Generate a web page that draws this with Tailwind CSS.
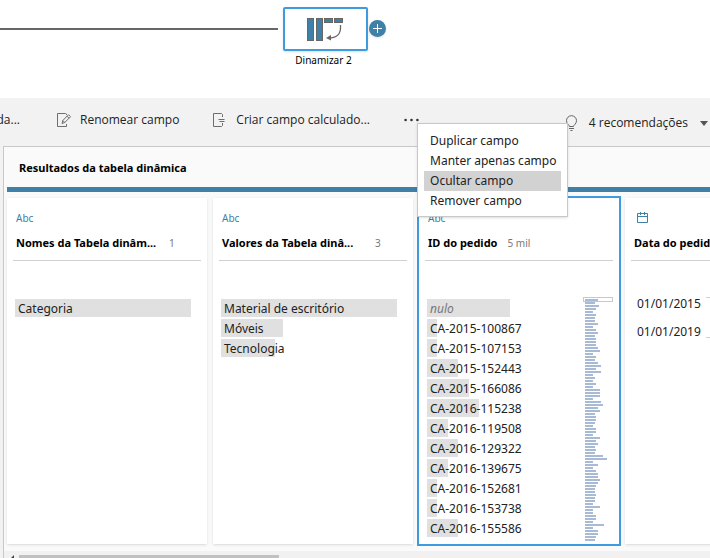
<!DOCTYPE html>
<html lang="pt-BR">
  <head>
    <meta charset="UTF-8" />
    <meta name="viewport" content="width=device-width, initial-scale=1.0" />
    <title>Fluxo - Resultados da tabela dinâmica</title>
    <script src="https://cdn.jsdelivr.net/npm/@tailwindcss/browser@4"></script>
  </head>
  <body
    class="h-screen flex flex-col overflow-hidden bg-white text-[#222] text-[12px] leading-5 font-['Noto_Sans','Open_Sans',sans-serif]"
  >
    <!-- Fluxo -->
    <header class="h-[98px] shrink-0 flex items-start pt-[7px]">
      <div class="w-[278px] h-0.5 mt-[21px] bg-[#6a6664]"></div>
      <div class="ml-[5px] w-[85px] flex flex-col">
        <button
          type="button"
          aria-labelledby="stepName"
          class="h-11 flex items-center justify-center rounded-xs border-2 border-[#3f9bdf] bg-white shadow-sm"
        >
          <svg class="mr-0.5" width="37" height="26" viewBox="0 0 37 26" fill="none">
            <g fill="#3f80a8" stroke="#6a6664">
              <rect x="1.5" y="2.500" width="6" height="22" />
              <rect x="10.5" y="2.500" width="6" height="22" />
              <rect x="18.500" y="2.500" width="8" height="4" />
              <rect x="28.500" y="2.500" width="8" height="4" />
            </g>
            <path d="M34.500 9v3c0 6-4 10-12 10" stroke="#6a6664" stroke-width="1.300" />
            <path d="M25 19l-5 3 5 2.500z" fill="#6a6664" />
          </svg>
        </button>
        <span id="stepName" class="mt-px pr-1 text-center text-[10px] leading-4 text-black">Dinamizar 2</span>
      </div>
      <button
        type="button"
        aria-label="Adicionar etapa"
        class="ml-px mt-[13px] size-[17px] flex items-center justify-center rounded-full bg-[#3f80a8] shadow-sm"
      >
        <svg width="9" height="9" viewBox="0 0 9 9" stroke="#fff"><path d="M4.500 0v9M0 4.500h9" /></svg>
      </button>
    </header>

    <!-- Barra de ferramentas -->
    <nav
      class="h-12 shrink-0 flex items-center bg-[#f2f2f2] pr-0.5 pb-1 whitespace-nowrap font-['Open_Sans',sans-serif]"
    >
      <button type="button" class="w-5 flex justify-end">Filtrar coluna selecionada...</button>
      <button type="button" class="ml-9 flex items-center gap-2">
        <svg width="16" height="16" viewBox="0 0 16 16" fill="none" stroke="#6e6e6e">
          <path d="M10.500 3V2L9.500 1.500h-8v13h9v-2.500" />
          <path d="M6 11.500l.8-3L12.500 2.700l2 2L8.800 10.500zM6.800 8.500l2 2M11 4.200l2 2" />
        </svg>
        Renomear campo
      </button>
      <button type="button" class="ml-[33px] flex items-center gap-2">
        <svg width="16" height="16" viewBox="0 0 16 16" fill="none" stroke="#6e6e6e">
          <path d="M10.500 5V2.500L9.500 1.500h-8v13h8l1-1V11M6.500 7.500h6M7.500 9.500h5" />
        </svg>
        Criar campo calculado...
      </button>
      <div class="relative ml-[34px]">
        <button type="button" aria-label="Mais opções" class="flex py-2">
          <svg width="15" height="4" viewBox="0 0 15 4" fill="#333">
            <circle cx="1.600" cy="2" r="1.300" />
            <circle cx="7.500" cy="2" r="1.300" />
            <circle cx="13.400" cy="2" r="1.300" />
          </svg>
        </button>
        <div
          role="menu"
          class="absolute left-[13px] top-[13px] z-10 w-[151px] flex flex-col border border-[#c8c8c8] bg-white px-1.5 pt-[7px] pb-[5px] shadow font-['Noto_Sans',sans-serif]"
        >
          <button type="button" role="menuitem" class="px-1.5 text-left">Duplicar campo</button>
          <button type="button" role="menuitem" class="px-1.5 text-left">Manter apenas campo</button>
          <button type="button" role="menuitem" class="px-1.5 text-left bg-[#d2d2d2]">Ocultar campo</button>
          <button type="button" role="menuitem" class="px-1.5 text-left">Remover campo</button>
        </div>
      </div>
      <button type="button" class="ml-auto pt-1.5 flex items-center">
        <svg width="13" height="17" viewBox="0 0 13 17" fill="none" stroke="#666">
          <path d="M4.500 11.500C4.500 10 1.500 9 1.500 5.700a5 5 0 0 1 10 0C11.500 9 8.500 10 8.500 11.500zM4 13.500h5M5.500 15.500h2" />
        </svg>
        <span class="ml-[11px]">4 recomendações</span>
        <svg class="ml-3" width="8" height="5" viewBox="0 0 8 5" fill="#555"><path d="M0 0h8L4 5z" /></svg>
      </button>
    </nav>

    <!-- Painel de perfil -->
    <div class="flex-1 min-h-0 flex bg-[#f2f2f2] pl-[3px]">
      <main class="flex-1 min-w-0 flex flex-col border-l border-t border-[#c8c8c8] bg-[#fafafa]">
        <h1 class="h-10 shrink-0 pl-[15px] pt-[11px] text-[11px] font-bold text-black">
          Resultados da tabela dinâmica
        </h1>
        <div class="ml-[3px] h-[5px] shrink-0 bg-[#3f80a8]"></div>

        <div class="flex-1 min-h-0 flex gap-1.5 overflow-hidden pl-[3px] pt-1.5 pb-[7px]">
          <section class="w-[200px] shrink-0 bg-white px-1.5 pt-2.5 shadow">
            <div class="h-5 pl-[3px] text-[10px] text-[#3f80a8]">Abc</div>
            <div class="h-[33px] flex items-center border-b border-[#d0d0d0] pl-[3px] pb-0.5 gap-2.5 whitespace-nowrap">
              <h2 class="w-[143px] text-[11px] font-bold text-black">Nomes da Tabela dinâm...</h2>
              <span class="text-[10px] text-[#777]">1</span>
            </div>
            <ul class="mt-[38px] pl-0.5 flex flex-col gap-0.5 leading-5 whitespace-nowrap">
              <li class="h-[18px] w-44 bg-[#e0e0e0] pl-[3px]">Categoria</li>
            </ul>
          </section>

          <section class="w-[200px] shrink-0 bg-white px-1.5 pt-2.5 shadow">
            <div class="h-5 pl-[3px] text-[10px] text-[#3f80a8]">Abc</div>
            <div class="h-[33px] flex items-center border-b border-[#d0d0d0] pl-[3px] pb-0.5 gap-2.5 whitespace-nowrap">
              <h2 class="w-[143px] text-[11px] font-bold text-black">Valores da Tabela dinâ...</h2>
              <span class="text-[10px] text-[#777]">3</span>
            </div>
            <ul class="mt-[38px] pl-0.5 flex flex-col gap-0.5 leading-5 whitespace-nowrap">
              <li class="h-[18px] w-44 bg-[#e0e0e0] pl-[3px]">Material de escritório</li>
              <li class="h-[18px] w-[62px] bg-[#e0e0e0] pl-[3px]">Móveis</li>
              <li class="h-[18px] w-[54px] bg-[#e0e0e0] pl-[3px]">Tecnologia</li>
            </ul>
          </section>

          <section class="w-[200px] shrink-0 bg-white px-1.5 pt-2.5 outline-2 outline-[#3f9bdf]">
            <div class="h-5 pl-[3px] text-[10px] text-[#3f80a8]">Abc</div>
            <div class="h-[33px] flex items-center border-b border-[#d0d0d0] pl-[3px] pb-0.5 gap-2.5 whitespace-nowrap">
              <h2 class="text-[11px] font-bold text-black">ID do pedido</h2>
              <span class="text-[10px] text-[#777]">5 mil</span>
            </div>
            <div class="mt-9 flex justify-between">
              <ul id="orderIds" class="mt-0.5 pl-0.5 flex flex-col gap-0.5 leading-5 whitespace-nowrap"></ul>
              <div class="relative w-[30px] pl-0.5 pt-0.5">
                <div class="absolute inset-x-0 top-0 h-[5px] border border-[#c8c8c8]"></div>
                <div id="miniMap" class="flex flex-col gap-px"></div>
              </div>
            </div>
          </section>

          <section class="w-[200px] shrink-0 bg-white px-1.5 pt-2.5 shadow">
            <div class="h-5 pl-[3px] pt-1">
              <svg class="ml-[3px]" width="11" height="11" viewBox="0 0 11 11" fill="none" stroke="#3f80a8">
                <path d="M.5 1.500h10v9H.5zM.5 4.500h10M3.500 0v3M7.500 0v3" />
              </svg>
            </div>
            <div class="h-[33px] flex items-center border-b border-[#d0d0d0] pl-[3px] pb-0.5 gap-2.5 whitespace-nowrap">
              <h2 class="text-[11px] font-bold text-black">Data do pedido</h2>
            </div>
            <div class="mt-9 pl-1.5 flex items-start gap-[5px]">
              <div class="-mt-[3px] flex flex-col gap-2">
                <span>01/01/2015</span>
                <span>01/01/2019</span>
              </div>
              <div class="h-[41px] flex-1 border-y border-[#d0d0d0]"></div>
            </div>
          </section>
        </div>

        <!-- Barra de rolagem -->
        <div class="h-[7px] shrink-0 flex items-end bg-[#f1f1f1]">
          <svg class="ml-[7px]" width="3" height="3" viewBox="0 0 3 3" fill="#444"><path d="M3 0v3H0z" /></svg>
          <div class="ml-[5px] h-[3px] w-[260px] bg-[#c1c1c1]"></div>
        </div>
      </main>
    </div>

    <script>
      const orders = [
        ["nulo", 83],
        ["CA-2015-100867", 10],
        ["CA-2015-107153", 10],
        ["CA-2015-152443", 31],
        ["CA-2015-166086", 42],
        ["CA-2016-115238", 52],
        ["CA-2016-119508", 21],
        ["CA-2016-129322", 31],
        ["CA-2016-139675", 21],
        ["CA-2016-152681", 10],
        ["CA-2016-153738", 10],
        ["CA-2016-155586", 31],
      ];
      const bars = [
        13, 10, 14, 11, 8, 11, 10, 10, 13, 8, 11, 13, 10, 11, 11, 11, 13, 15, 8,
        11, 10, 13, 16, 11, 16, 8, 10, 8, 11, 8, 15, 15, 15, 8, 16, 18, 13, 15,
        10, 11, 11, 10, 8, 11, 11, 8, 15, 11, 13, 10, 11, 10, 18, 22, 8, 13, 8,
        11, 13, 13, 15, 13, 11, 10, 10, 11, 10, 10, 8, 15, 8, 8, 11, 11, 8, 19,
        8, 13, 13, 11, 10,
      ];

      const orderIds = document.getElementById("orderIds");
      orders.forEach(([label, width]) => {
        const li = document.createElement("li");
        li.className = "h-[18px] bg-[#e0e0e0] pl-[3px]";
        if (label === "nulo") li.className += " italic text-[#777]";
        li.style.width = width + "px";
        li.textContent = label;
        orderIds.appendChild(li);
      });

      const miniMap = document.getElementById("miniMap");
      bars.forEach((width) => {
        const bar = document.createElement("div");
        bar.className = "h-0.5 bg-[#a9bbd4]";
        bar.style.width = width + "px";
        miniMap.appendChild(bar);
      });
    </script>
  </body>
</html>
